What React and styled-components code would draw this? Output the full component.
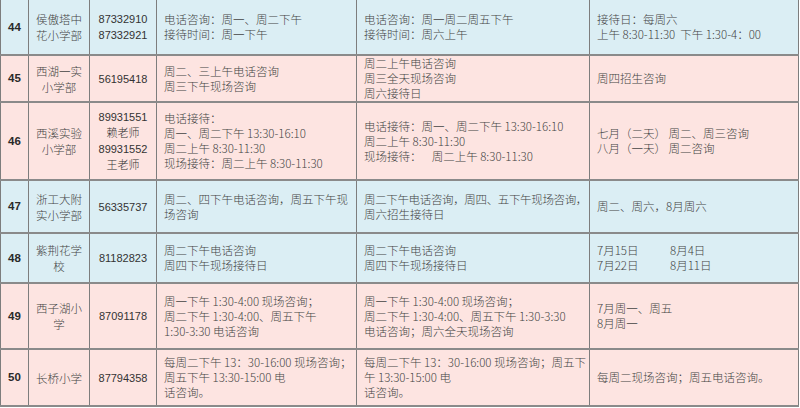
import styled, { createGlobalStyle } from 'styled-components';

const GlobalStyle = createGlobalStyle`
  body {
    margin: 0;
    background: #ffffff;
    font-family: "Liberation Sans", "Noto Sans CJK SC", sans-serif;
  }
`;

const Table = styled.table`
  width: 798px;
  border-collapse: collapse;
  table-layout: fixed;
  color: #444444;
  font-size: 11.5px;
`;

const Col = styled.col`
  width: ${(p) => p.w}px;
`;

const Row = styled.tr`
  height: ${(p) => p.h}px;
  background: ${(p) => (p.tone === 'blue' ? '#dbeef4' : '#fde4e1')};
`;

const Cell = styled.td`
  border-left: 1px solid #7d7d7d;
  border-right: 1px solid #7d7d7d;
  border-bottom: 2px solid #8a8a8a;
  padding: 0 ${(p) => (p.center ? 2 : 7)}px;
  text-align: ${(p) => (p.center ? 'center' : 'left')};
  vertical-align: middle;
  line-height: ${(p) => p.lh || 15}px;
  white-space: nowrap;
  overflow: hidden;
  font-family: "Noto Sans CJK SC", "Liberation Sans", sans-serif;
  font-weight: 300;
`;

const NumCell = styled(Cell)`
  font-family: "Liberation Sans", sans-serif;
  font-weight: 700;
  font-size: 11.5px;
  color: #2a2a2a;
`;

const Phone = styled(Cell)`
  font-family: "Liberation Sans", "Noto Sans CJK SC", sans-serif;
  font-size: 11px;
  font-weight: 300;
  color: #333333;
`;

const Line = styled.div`
  white-space: pre;
  letter-spacing: ${(p) => (p.tight ? '-0.35px' : 'normal')};
`;

const Date = styled.span`
  display: inline-block;
  width: 73px;
`;

const rows = [
  {
    no: 44, h: 55, tone: 'blue',
    name: ['侯傲塔中', '花小学部'],
    phone: ['87332910', '87332921'],
    a: ['电话咨询：周一、周二下午', '接待时间：周一下午'],
    b: ['电话咨询：周一周二周五下午', '接待时间：周六上午'],
    c: ['接待日：每周六', '上午 8:30-11:30  下午 1:30-4：00'],
  },
  {
    no: 45, h: 46, tone: 'pink',
    name: ['西湖一实', '小学部'],
    phone: ['56195418'],
    a: ['周二、三上午电话咨询', '周三下午现场咨询'],
    b: ['周二上午电话咨询', '周三全天现场咨询', '周六接待日'],
    c: ['周四招生咨询'],
  },
  {
    no: 46, h: 78, tone: 'pink',
    name: ['西溪实验', '小学部'],
    phone: ['89931551', '赖老师', '89931552', '王老师'],
    a: ['电话接待：', '周一、周二下午 13:30-16:10', '周二上午 8:30-11:30', '现场接待：周二上午 8:30-11:30'],
    b: ['电话接待：周一、周二下午 13:30-16:10', '周二上午 8:30-11:30', '现场接待：    周二上午 8:30-11:30'],
    c: ['七月（二天） 周二、周三咨询', '八月（一天） 周二咨询'],
  },
  {
    no: 47, h: 53, tone: 'blue',
    name: ['浙工大附', '实小学部'],
    phone: ['56335737'],
    a: ['周二、四下午电话咨询，周五下午现', '场咨询'],
    b: [{ text: '周二下午电话咨询，周四、五下午现场咨询，', tight: true }, '周六招生接待日'],
    c: ['周二、周六，8月周六'],
  },
  {
    no: 48, h: 50, tone: 'blue',
    name: ['紫荆花学', '校'],
    phone: ['81182823'],
    a: ['周二下午电话咨询', '周四下午现场接待日'],
    b: ['周二下午电话咨询', '周四下午现场接待日'],
    c: [{ dates: ['7月15日', '8月4日'] }, { dates: ['7月22日', '8月11日'] }],
  },
  {
    no: 49, h: 66, tone: 'pink',
    name: ['西子湖小', '学'],
    phone: ['87091178'],
    a: ['周一下午 1:30-4:00 现场咨询；', '周二下午 1:30-4:00、周五下午', '1:30-3:30 电话咨询'],
    b: ['周一下午 1:30-4:00 现场咨询；', '周二下午 1:30-4:00、周五下午 1:30-3:30', '电话咨询；周六全天现场咨询'],
    c: ['7月周一、周五', '8月周一'],
  },
  {
    no: 50, h: 57, tone: 'pink',
    name: ['长桥小学'],
    phone: ['87794358'],
    a: ['每周二下午 13：30-16:00 现场咨询；', '周五下午 13:30-15:00 电', '话咨询。'],
    b: ['每周二下午 13：30-16:00 现场咨询；周五下', '午 13:30-15:00 电', '话咨询。'],
    c: ['每周二现场咨询；周五电话咨询。'],
  },
];

const Lines = ({ items }) =>
  items.map((t, i) => {
    if (typeof t === 'string') return <Line key={i}>{t}</Line>;
    if (t.dates)
      return (
        <Line key={i}>
          <Date>{t.dates[0]}</Date>
          {t.dates[1]}
        </Line>
      );
    return (
      <Line key={i} tight={t.tight}>
        {t.text}
      </Line>
    );
  });

export default function App() {
  return (
    <>
      <GlobalStyle />
      <Table>
        <colgroup>
          <Col w={28} />
          <Col w={61} />
          <Col w={67} />
          <Col w={200} />
          <Col w={233} />
          <Col w={209} />
        </colgroup>
        <tbody>
          {rows.map((r) => (
            <Row key={r.no} h={r.h} tone={r.tone}>
              <NumCell center>{r.no}</NumCell>
              <Cell center lh={16}>
                <Lines items={r.name} />
              </Cell>
              <Phone center lh={16}>
                <Lines items={r.phone} />
              </Phone>
              <Cell>
                <Lines items={r.a} />
              </Cell>
              <Cell>
                <Lines items={r.b} />
              </Cell>
              <Cell>
                <Lines items={r.c} />
              </Cell>
            </Row>
          ))}
        </tbody>
      </Table>
    </>
  );
}
